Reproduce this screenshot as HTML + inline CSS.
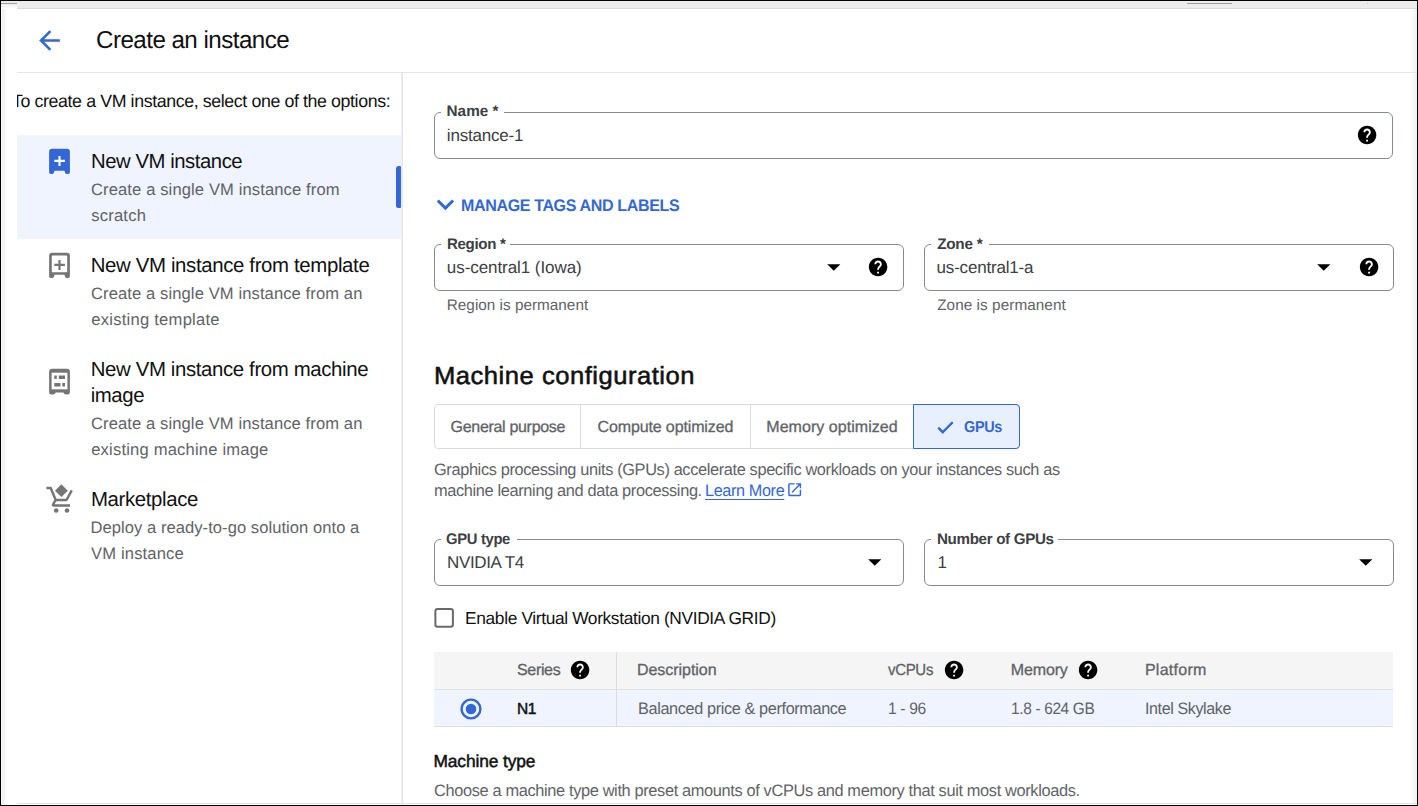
<!DOCTYPE html>
<html lang="en"><head><meta charset="utf-8"><title>Create an instance</title><style>
*{box-sizing:border-box;margin:0;padding:0}
ul{list-style:none}
h1,h2,h3,small,label,a{font:inherit}
html,body{width:1418px;height:806px;overflow:hidden;background:#fff}
body{position:relative;font-family:"Liberation Sans",sans-serif;text-rendering:geometricPrecision}
.t{position:absolute;white-space:pre;font-weight:400;display:block;transform-origin:0 50%}
.i{position:absolute;display:block;overflow:visible}
.b{position:absolute;display:block}
.fld{position:absolute;border:1px solid #858b91;border-radius:6px;background:transparent}
.notch{position:absolute;top:-2px;height:4px;background:#fff;display:block}
.lnk{text-decoration:underline;text-decoration-thickness:1.4px;text-underline-offset:3.2px}
</style></head><body>
<div class="b" style="left:17px;top:1px;width:1400px;height:7px;background:#ececec"></div>
<div class="b" style="left:17px;top:8px;width:1400px;height:1px;background:#d6d9de"></div>
<div class="b" style="left:1px;top:1px;width:16px;height:8px;background:linear-gradient(#e9e9e9,#f2f2f2 50%,#fff)"></div>
<div class="b" style="left:1px;top:3px;width:16px;height:1px;background:#a0a0a0"></div>
<div class="b" style="left:1367px;top:3px;width:1px;height:1px;background:#c4c4c4"></div>
<div class="b" style="left:1187px;top:3px;width:45px;height:1px;background:#9c9c9c"></div>
<div class="b" style="left:2px;top:9px;width:5px;height:796px;background:linear-gradient(90deg,#efefef,#f4f4f4 40%,#fff)"></div>
<div class="b" style="left:1410px;top:9px;width:7px;height:796px;background:linear-gradient(90deg,#fff,#efefef)"></div>
<div class="b" style="left:17px;top:803px;width:1399px;height:1px;background:#e2e2e2"></div>
<header>
<nav class="back"><svg class="i" style="left:33.90px;top:24.90px" width="31" height="31" viewBox="0 0 24 24" fill="#3367d6" ><path d="M20 11H7.83l5.59-5.59L12 4l-8 8 8 8 1.41-1.41L7.83 13H20v-2z"/></svg></nav>
<h1 class="t" style="left:96.00px;top:25.50px;font-size:24.48px;line-height:30.6px;letter-spacing:-0.539px;color:#111111;transform:scaleX(0.9869);">Create an instance</h1>

<div class="b" style="left:17px;top:72px;width:1400px;height:1px;background:#e6e6e6"></div>
</header>
<aside>
<div class="b" style="left:17px;top:73px;width:385px;height:732px;overflow:hidden">
<div class="b" style="left:-17px;top:-73px;width:1418px;height:806px">
<p><span class="t" style="left:11.90px;top:90.00px;font-size:17.85px;line-height:22.3125px;letter-spacing:-0.393px;color:#111111;transform:scaleX(0.9961);">To create a VM instance, select one of the options:</span>
</p>
<ul>
<li class="selected"><div class="b" style="left:17px;top:135px;width:384px;height:103.5px;background:#eff4fe"></div><div class="b" style="left:396px;top:166px;width:6px;height:41.5px;background:#3367d6;border-radius:2.5px"></div><svg class="i" style="left:45px;top:145px" width="30" height="32" viewBox="0 0 30 32"><path d="M4.1 6.8a3 3 0 0 1 3-3h14.8a3 3 0 0 1 3 3v20.4a1.8 1.8 0 0 1-1.8 1.8h-1.2a2 2 0 0 1-2-2l-.5-1.2H9.600l-.5 1.2a2 2 0 0 1-2 2H5.900a1.8 1.8 0 0 1-1.8-1.8z" fill="#3367d6"/><path d="M14.5 10.900v10M9.300 15.900h10.600" stroke="#fff" stroke-width="2.100" fill="none"/></svg><h3 class="t" style="left:90.70px;top:150.00px;font-size:20.4px;line-height:25.5px;letter-spacing:-0.449px;color:#111111;transform:scaleX(0.9952);">New VM instance</h3>
<p><span class="t" style="left:91.00px;top:180.00px;font-size:16.57px;line-height:20.7125px;letter-spacing:0.119px;color:#5f6368;">Create a single VM instance from</span>
 <span class="t" style="left:91.20px;top:206.00px;font-size:16.57px;line-height:20.7125px;letter-spacing:0.217px;color:#5f6368;">scratch</span>
</p></li>
<li><svg class="i" style="left:45px;top:249px" width="30" height="32" viewBox="0 0 30 32"><path d="M4.1 6.8a3 3 0 0 1 3-3h14.8a3 3 0 0 1 3 3v20.4a1.8 1.8 0 0 1-1.8 1.8h-1.2a2 2 0 0 1-2-2l-.5-1.2H9.600l-.5 1.2a2 2 0 0 1-2 2H5.900a1.8 1.8 0 0 1-1.8-1.8z" fill="#757575"/><rect x="6.800" y="6.600" width="15.400" height="16.700" rx="0.8" fill="#fff"/><path d="M14.5 10.900v10M9.300 15.900h10.600" stroke="#757575" stroke-width="2.200" fill="none"/></svg><h3 class="t" style="left:90.70px;top:254.00px;font-size:20.4px;line-height:25.5px;letter-spacing:-0.354px;color:#111111;">New VM instance from template</h3>
<p><span class="t" style="left:91.00px;top:284.00px;font-size:16.57px;line-height:20.7125px;letter-spacing:0.103px;color:#5f6368;">Create a single VM instance from an</span>
 <span class="t" style="left:91.20px;top:310.00px;font-size:16.57px;line-height:20.7125px;letter-spacing:0.256px;color:#5f6368;">existing template</span>
</p></li>
<li><svg class="i" style="left:45px;top:364.9px" width="30" height="32" viewBox="0 0 30 32"><path d="M4.1 6.8a3 3 0 0 1 3-3h14.8a3 3 0 0 1 3 3v20.4a2.2 2.2 0 0 1-2.2 2.2h-1.900a2.4 2.4 0 0 1-2.2-1.4l-.4-.6H10.800l-.4.6a2.400 2.400 0 0 1-2.200 1.400H6.300a2.200 2.200 0 0 1-2.200-2.200z" fill="#757575"/><rect x="6.600" y="7.700" width="15.800" height="16.600" fill="#fff"/><path d="M9.300 10.400h2.500v3.500h-2.500zM13.800 10.400h6.200v3.500h-6.200zM9.300 17.900h6.200v3.700h-6.200zM17.300 17.900h2.700v3.700h-2.700z" fill="#757575"/></svg><h3><span class="t" style="left:90.70px;top:358.00px;font-size:20.4px;line-height:25.5px;letter-spacing:-0.37px;color:#111111;">New VM instance from machine</span>
 <span class="t" style="left:90.70px;top:384.00px;font-size:20.4px;line-height:25.5px;letter-spacing:-0.425px;color:#111111;">image</span>
</h3><p><span class="t" style="left:91.00px;top:414.00px;font-size:16.57px;line-height:20.7125px;letter-spacing:0.103px;color:#5f6368;">Create a single VM instance from an</span>
 <span class="t" style="left:91.20px;top:440.00px;font-size:16.57px;line-height:20.7125px;letter-spacing:0.19px;color:#5f6368;">existing machine image</span>
</p></li>
<li><svg class="i" style="left:44px;top:482px" width="32" height="32" viewBox="0 0 32 32"><g fill="none" stroke="#757575" stroke-width="2.400" stroke-linejoin="round"><path d="M2.400 6h4.300l5 12h10.800l5.300-9.600"/><path d="M11.600 18.200l-2.500 4.200q-.5 1.100.8 1.100h16.200"/></g><path d="M17.400 2.300l6.400 6.400-6.400 6.400-6.400-6.400z" fill="#757575"/><circle cx="12.200" cy="28.500" r="2.300" fill="#757575"/><circle cx="23" cy="28.500" r="2.300" fill="#757575"/></svg><h3 class="t" style="left:90.90px;top:488.00px;font-size:20.4px;line-height:25.5px;letter-spacing:-0.36px;color:#111111;">Marketplace</h3>
<p><span class="t" style="left:90.50px;top:518.00px;font-size:16.57px;line-height:20.7125px;letter-spacing:0.051px;color:#5f6368;">Deploy a ready-to-go solution onto a</span>
 <span class="t" style="left:91.00px;top:544.00px;font-size:16.57px;line-height:20.7125px;letter-spacing:0.16px;color:#5f6368;">VM instance</span>
</p></li>
</ul>
</div></div>
<div class="b" style="left:401px;top:73px;width:2px;height:732px;background:linear-gradient(90deg,#eeeeee 50%,#e6e6e6 50%)"></div>
</aside>
<main>
<form>
<div class="field"><div class="fld" style="left:434px;top:112px;width:959px;height:47px"><i class="notch" style="left:6px;width:62.5px"></i></div>
<label class="t lbl" style="left:446.50px;top:102.40px;font-size:15.3px;line-height:19.125px;letter-spacing:0.04px;color:#3c4043;font-weight:700;">Name *</label>
<span class="t" style="left:446.80px;top:125.00px;font-size:17.03px;line-height:21.2875px;letter-spacing:-0.2px;color:#3c4043;">instance-1</span>
<svg class="i" style="left:1356.30px;top:124.20px" width="22.2" height="22.2" viewBox="0 0 24 24" fill="#000" ><path d="M12 2C6.48 2 2 6.48 2 12s4.48 10 10 10 10-4.48 10-10S17.52 2 12 2zm1 17h-2v-2h2v2zm2.07-7.75l-.9.92C13.45 12.9 13 13.5 13 15h-2v-.5c0-1.1.45-2.1 1.17-2.83l1.24-1.26c.37-.36.59-.86.59-1.41 0-1.1-.9-2-2-2s-2 .9-2 2H8c0-2.21 1.79-4 4-4s4 1.79 4 4c0 .88-.36 1.68-.93 2.25z"/></svg></div>
<div class="expander"><svg class="i" style="left:428.30px;top:186.60px" width="34.8" height="34.8" viewBox="0 0 24 24" fill="#3367d6" ><path d="M16.59 8.59L12 13.17 7.41 8.59 6 10l6 6 6-6z"/></svg> <span class="t" style="left:461.30px;top:196.30px;font-size:16.73px;line-height:20.9125px;letter-spacing:-0.368px;color:#3367d6;font-weight:700;transform:scaleX(0.9579);">MANAGE TAGS AND LABELS</span>
</div>
<div class="field"><div class="fld" style="left:434px;top:244px;width:469.5px;height:47px"><i class="notch" style="left:6px;width:69px"></i></div>
<label class="t lbl" style="left:446.50px;top:234.60px;font-size:15.3px;line-height:19.125px;letter-spacing:-0.337px;color:#3c4043;font-weight:700;transform:scaleX(0.9856);">Region *</label>
<span class="t" style="left:446.80px;top:256.80px;font-size:17.03px;line-height:21.2875px;letter-spacing:-0.071px;color:#3c4043;">us-central1 (Iowa)</span>
<svg class="i" style="left:817.75px;top:251.45px" width="31.5" height="31.5" viewBox="0 0 24 24" fill="#000" ><path d="M7 10l5 5 5-5z"/></svg><svg class="i" style="left:866.50px;top:256.20px" width="22.2" height="22.2" viewBox="0 0 24 24" fill="#000" ><path d="M12 2C6.48 2 2 6.48 2 12s4.48 10 10 10 10-4.48 10-10S17.52 2 12 2zm1 17h-2v-2h2v2zm2.07-7.75l-.9.92C13.45 12.9 13 13.5 13 15h-2v-.5c0-1.1.45-2.1 1.17-2.83l1.24-1.26c.37-.36.59-.86.59-1.41 0-1.1-.9-2-2-2s-2 .9-2 2H8c0-2.21 1.79-4 4-4s4 1.79 4 4c0 .88-.36 1.68-.93 2.25z"/></svg> <small class="t" style="left:446.80px;top:295.80px;font-size:15.3px;line-height:19.125px;letter-spacing:0.011px;color:#5f6368;">Region is permanent</small>
</div>
<div class="field"><div class="fld" style="left:924px;top:244px;width:470px;height:47px"><i class="notch" style="left:6px;width:58px"></i></div>
<label class="t lbl" style="left:937.20px;top:234.60px;font-size:15.3px;line-height:19.125px;letter-spacing:-0.26px;color:#3c4043;font-weight:700;">Zone *</label>
<span class="t" style="left:936.60px;top:256.80px;font-size:17.03px;line-height:21.2875px;letter-spacing:-0.208px;color:#3c4043;">us-central1-a</span>
<svg class="i" style="left:1308.25px;top:251.45px" width="31.5" height="31.5" viewBox="0 0 24 24" fill="#000" ><path d="M7 10l5 5 5-5z"/></svg><svg class="i" style="left:1357.50px;top:256.20px" width="22.2" height="22.2" viewBox="0 0 24 24" fill="#000" ><path d="M12 2C6.48 2 2 6.48 2 12s4.48 10 10 10 10-4.48 10-10S17.52 2 12 2zm1 17h-2v-2h2v2zm2.07-7.75l-.9.92C13.45 12.9 13 13.5 13 15h-2v-.5c0-1.1.45-2.1 1.17-2.83l1.24-1.26c.37-.36.59-.86.59-1.41 0-1.1-.9-2-2-2s-2 .9-2 2H8c0-2.21 1.79-4 4-4s4 1.79 4 4c0 .88-.36 1.68-.93 2.25z"/></svg> <small class="t" style="left:937.20px;top:295.80px;font-size:15.3px;line-height:19.125px;letter-spacing:0.062px;color:#5f6368;">Zone is permanent</small>
</div>
<section>
<h2 class="t" style="left:434.20px;top:361.20px;font-size:24.82px;line-height:31.025px;letter-spacing:0.496px;color:#111111;-webkit-text-stroke:0.55px #111111;transform:scaleX(1.031);">Machine configuration</h2>

<div class="tabs" role="tablist">
<div class="b" style="left:434px;top:404px;width:586px;height:45px;border:1px solid #dadce0;border-radius:4px"></div>
<div class="b" style="left:580px;top:404px;width:1px;height:45px;background:#dadce0"></div>
<div class="b" style="left:750px;top:404px;width:1px;height:45px;background:#dadce0"></div>
<div class="b" style="left:913px;top:404px;width:107px;height:45px;border:1px solid #3367d6;border-radius:0 4px 4px 0;background:#e8f0fe"></div>
<span class="t" style="left:450.60px;top:417.70px;font-size:16.01px;line-height:20.012500000000003px;letter-spacing:-0.314px;color:#5f6368;-webkit-text-stroke:0.3px #5f6368;">General purpose</span>

<span class="t" style="left:597.50px;top:417.70px;font-size:16.01px;line-height:20.012500000000003px;letter-spacing:-0.125px;color:#5f6368;-webkit-text-stroke:0.3px #5f6368;">Compute optimized</span>

<span class="t" style="left:766.30px;top:417.70px;font-size:16.01px;line-height:20.012500000000003px;letter-spacing:0.04px;color:#5f6368;-webkit-text-stroke:0.3px #5f6368;">Memory optimized</span>

<svg class="i" style="left:934.65px;top:417.35px" width="20.7" height="20.7" viewBox="0 0 24 24" fill="#3367d6" stroke="#3367d6" stroke-width="1.1"><path d="M9 16.17L4.83 12l-1.42 1.41L9 19 21 7l-1.41-1.41z"/></svg>
<span class="t" style="left:964.40px;top:417.70px;font-size:15.71px;line-height:19.637500000000003px;letter-spacing:-0.346px;color:#3367d6;font-weight:700;transform:scaleX(0.9199);">GPUs</span>

</div>
<p><span class="t" style="left:433.60px;top:460.40px;font-size:16.57px;line-height:20.7125px;letter-spacing:-0.365px;color:#5f6368;transform:scaleX(0.9865);">Graphics processing units (GPUs) accelerate specific workloads on your instances such as</span>
 <span class="t" style="left:433.60px;top:480.80px;font-size:16.57px;line-height:20.7125px;letter-spacing:-0.365px;color:#5f6368;transform:scaleX(0.9882);">machine learning and data processing.</span>
  <a class="t lnk" style="left:705.30px;top:480.80px;font-size:16.57px;line-height:20.7125px;letter-spacing:-0.365px;color:#3367d6;transform:scaleX(0.9784);">Learn More</a>
<svg class="i" style="left:786.35px;top:480.65px" width="17.3" height="17.3" viewBox="0 0 24 24" fill="#3367d6" ><path d="M19 19H5V5h7V3H5c-1.110 0-2 .9-2 2v14c0 1.100.890 2 2 2h14c1.100 0 2-.9 2-2v-7h-2v7zM14 3v2h3.590l-9.830 9.830 1.410 1.410L19 6.410V10h2V3h-7z"/></svg></p>
<div class="field"><div class="fld" style="left:434px;top:539px;width:469.5px;height:47px"><i class="notch" style="left:6px;width:76.3px"></i></div>
<label class="t lbl" style="left:446.00px;top:529.50px;font-size:15.3px;line-height:19.125px;letter-spacing:-0.337px;color:#3c4043;font-weight:700;transform:scaleX(0.9678);">GPU type</label>
<span class="t" style="left:447.00px;top:552.00px;font-size:17.03px;line-height:21.2875px;letter-spacing:-0.363px;color:#3c4043;">NVIDIA T4</span>
<svg class="i" style="left:859.05px;top:546.45px" width="31.5" height="31.5" viewBox="0 0 24 24" fill="#000" ><path d="M7 10l5 5 5-5z"/></svg></div>
<div class="field"><div class="fld" style="left:924px;top:539px;width:470px;height:47px"><i class="notch" style="left:6px;width:127px"></i></div>
<label class="t lbl" style="left:936.50px;top:529.50px;font-size:15.3px;line-height:19.125px;letter-spacing:-0.337px;color:#3c4043;font-weight:700;transform:scaleX(0.9912);">Number of GPUs</label>
<span class="t" style="left:937.50px;top:552.00px;font-size:17.03px;line-height:21.2875px;letter-spacing:0px;color:#3c4043;">1</span>
<svg class="i" style="left:1349.55px;top:546.45px" width="31.5" height="31.5" viewBox="0 0 24 24" fill="#000" ><path d="M7 10l5 5 5-5z"/></svg></div>
<div class="checkbox"><svg class="i" style="left:430px;top:604px" width="28" height="28" viewBox="0 0 28 28"><rect x="5.400" y="4.900" width="17.500" height="17.900" rx="2.200" fill="#fff" stroke="#696969" stroke-width="2"/></svg><label class="t" style="left:465.10px;top:608.00px;font-size:17.34px;line-height:21.675px;letter-spacing:-0.354px;color:#111111;">Enable Virtual Workstation (NVIDIA GRID)</label>
</div>
<div class="table" role="table">
<div class="b" style="left:434px;top:652px;width:959px;height:37.5px;background:#f5f5f5"></div>
<div class="b" style="left:434px;top:689px;width:959px;height:38px;background:#eff4fe;border-top:1px solid #e0e0e0;border-bottom:1px solid #e0e0e0"></div>
<div class="b" style="left:616px;top:652px;width:1px;height:75px;background:#dadce0"></div>
<div role="row"><span class="t" style="left:517.00px;top:661.20px;font-size:16.01px;line-height:20.012500000000003px;letter-spacing:-0.34px;color:#5f6368;-webkit-text-stroke:0.3px #5f6368;">Series</span>
<svg class="i" style="left:568.80px;top:658.90px" width="22.2" height="22.2" viewBox="0 0 24 24" fill="#000" ><path d="M12 2C6.48 2 2 6.48 2 12s4.48 10 10 10 10-4.48 10-10S17.52 2 12 2zm1 17h-2v-2h2v2zm2.07-7.75l-.9.92C13.45 12.9 13 13.5 13 15h-2v-.5c0-1.1.45-2.1 1.17-2.83l1.24-1.26c.37-.36.59-.86.59-1.41 0-1.1-.9-2-2-2s-2 .9-2 2H8c0-2.21 1.79-4 4-4s4 1.79 4 4c0 .88-.36 1.68-.93 2.25z"/></svg> <span class="t" style="left:637.00px;top:661.20px;font-size:16.01px;line-height:20.012500000000003px;letter-spacing:-0.04px;color:#5f6368;-webkit-text-stroke:0.3px #5f6368;">Description</span>
 <span class="t" style="left:888.30px;top:661.20px;font-size:16.01px;line-height:20.012500000000003px;letter-spacing:-0.352px;color:#5f6368;-webkit-text-stroke:0.3px #5f6368;transform:scaleX(0.9384);">vCPUs</span>
<svg class="i" style="left:942.60px;top:658.90px" width="22.2" height="22.2" viewBox="0 0 24 24" fill="#000" ><path d="M12 2C6.48 2 2 6.48 2 12s4.48 10 10 10 10-4.48 10-10S17.52 2 12 2zm1 17h-2v-2h2v2zm2.07-7.75l-.9.92C13.45 12.9 13 13.5 13 15h-2v-.5c0-1.1.45-2.1 1.17-2.83l1.24-1.26c.37-.36.59-.86.59-1.41 0-1.1-.9-2-2-2s-2 .9-2 2H8c0-2.21 1.79-4 4-4s4 1.79 4 4c0 .88-.36 1.68-.93 2.25z"/></svg> <span class="t" style="left:1010.70px;top:661.20px;font-size:16.01px;line-height:20.012500000000003px;letter-spacing:-0.12px;color:#5f6368;-webkit-text-stroke:0.3px #5f6368;">Memory</span>
<svg class="i" style="left:1076.80px;top:658.90px" width="22.2" height="22.2" viewBox="0 0 24 24" fill="#000" ><path d="M12 2C6.48 2 2 6.48 2 12s4.48 10 10 10 10-4.48 10-10S17.52 2 12 2zm1 17h-2v-2h2v2zm2.07-7.75l-.9.92C13.45 12.9 13 13.5 13 15h-2v-.5c0-1.1.45-2.1 1.17-2.83l1.24-1.26c.37-.36.59-.86.59-1.41 0-1.1-.9-2-2-2s-2 .9-2 2H8c0-2.21 1.79-4 4-4s4 1.79 4 4c0 .88-.36 1.68-.93 2.25z"/></svg> <span class="t" style="left:1144.90px;top:661.20px;font-size:16.01px;line-height:20.012500000000003px;letter-spacing:0.271px;color:#5f6368;-webkit-text-stroke:0.3px #5f6368;">Platform</span>
</div>
<div role="row"><svg class="i" style="left:458.7px;top:697.4px" width="24" height="24" viewBox="0 0 24 24"><circle cx="12" cy="12" r="9.400" fill="none" stroke="#3367d6" stroke-width="2.400"/><circle cx="12" cy="12" r="5.300" fill="#3367d6"/></svg><span class="t" style="left:517.00px;top:699.00px;font-size:16.15px;line-height:20.1875px;letter-spacing:-0.355px;color:#111111;-webkit-text-stroke:0.5px #111111;transform:scaleX(0.9621);">N1</span>
 <span class="t" style="left:637.50px;top:698.50px;font-size:16.57px;line-height:20.7125px;letter-spacing:-0.365px;color:#5f6368;transform:scaleX(0.9798);">Balanced price &amp; performance</span>
 <span class="t" style="left:888.30px;top:698.50px;font-size:16.57px;line-height:20.7125px;letter-spacing:-0.365px;color:#5f6368;transform:scaleX(0.9444);">1 - 96</span>
 <span class="t" style="left:1010.70px;top:698.50px;font-size:16.57px;line-height:20.7125px;letter-spacing:-0.365px;color:#5f6368;transform:scaleX(0.9319);">1.8 - 624 GB</span>
 <span class="t" style="left:1144.90px;top:698.50px;font-size:16.57px;line-height:20.7125px;letter-spacing:-0.365px;color:#5f6368;transform:scaleX(0.9647);">Intel Skylake</span>
</div>
</div>
<h3 class="t" style="left:433.50px;top:751.20px;font-size:17.34px;line-height:21.675px;letter-spacing:-0.1px;color:#111111;-webkit-text-stroke:0.5px #111111;">Machine type</h3>

<p><span class="t" style="left:433.90px;top:780.80px;font-size:16.57px;line-height:20.7125px;letter-spacing:-0.365px;color:#5f6368;transform:scaleX(0.9886);">Choose a machine type with preset amounts of vCPUs and memory that suit most workloads.</span>
</p>
</section>
</form>
</main>
<div class="b" style="left:0;top:0;width:1418px;height:1px;background:#000"></div>
<div class="b" style="left:0;top:0;width:1px;height:806px;background:#000"></div>
<div class="b" style="left:1417px;top:0;width:1px;height:806px;background:#000"></div>
<div class="b" style="left:0;top:805px;width:1418px;height:1px;background:#000"></div>
</body></html>
